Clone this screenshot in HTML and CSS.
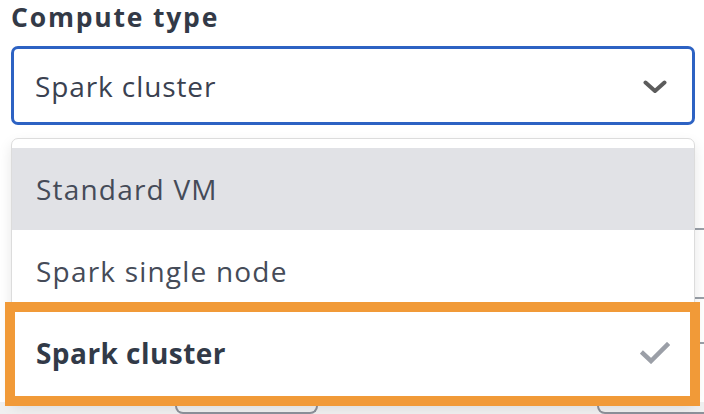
FILE: index.html
```html
<!DOCTYPE html>
<html lang="en">
<head>
<meta charset="utf-8">
<title>Compute type</title>
<link rel="stylesheet" href="styles.css">
</head>
<body>
<div class="page">
  <label class="field-label">Compute type</label>
  <div class="select-wrap">
    <div class="select">
      <span class="select-value">Spark cluster</span>
      <svg class="chevron" width="24" height="14" viewBox="0 0 24 14"><path d="M2.5 2.5 L12 11 L21.5 2.5" fill="none" stroke="#5c5c5c" stroke-width="4" stroke-linecap="round" stroke-linejoin="round"/></svg>
    </div>
    <ul class="menu">
      <li class="item hover">Standard VM</li>
      <li class="item">Spark single node</li>
      <li class="item selected">Spark cluster
        <svg class="check" width="30" height="22" viewBox="0 0 30 22"><path d="M3 11.5 L11 19 L27 3" fill="none" stroke="#9b9fa7" stroke-width="4.5" stroke-linecap="square"/></svg>
      </li>
    </ul>
  </div>
  <div class="behind">
    <div class="rule r1"></div>
    <div class="rule r2"></div>
    <div class="rule r3"></div>
    <div class="strip">
      <div class="ghost-box b1"></div>
      <div class="ghost-box b2"></div>
    </div>
  </div>
</div>
</body>
</html>
```

FILE: styles.css
```css
* { box-sizing: border-box; }
html, body { margin: 0; padding: 0; background: #ffffff; }
body {
  font-family: "Open Sans", "Noto Sans", sans-serif;
  width: 704px;
  height: 414px;
  overflow: hidden;
}
.page {
  position: relative;
  padding: 0 9px 0 11px;
}
.field-label {
  display: block;
  font-weight: 700;
  font-size: 26.5px;
  line-height: 34px;
  letter-spacing: 1.8px;
  color: #333a47;
  margin-left: 0;
  height: 46px;
}
.select-wrap { position: relative; }
.select {
  height: 79px;
  border: 3px solid #2d62c3;
  border-radius: 7px;
  display: flex;
  align-items: center;
  justify-content: space-between;
  padding: 0 25px 0 21px;
}
.select-value {
  font-size: 28px;
  letter-spacing: 0.9px;
  color: #3a4150;
  margin-top: 1px;
}
.chevron { margin-top: 2px; }
.menu {
  position: absolute;
  z-index: 2;
  top: 92px;
  left: 0;
  right: 0;
  margin: 0;
  padding: 9px 0 6px;
  list-style: none;
  background: #fff;
  border: 1px solid #dcdcdc;
  border-radius: 7px;
  box-shadow: 0 6px 14px rgba(0, 0, 0, 0.10);
}
.item {
  position: relative;
  height: 82px;
  display: flex;
  align-items: center;
  justify-content: space-between;
  padding: 0 24px 0 24px;
  font-size: 28px;
  letter-spacing: 1.2px;
  color: #454b58;
}
.item.hover { background: #e1e2e6; }
.item.selected {
  font-weight: 700;
  letter-spacing: 0.45px;
  color: #323a48;
}
.item.selected::after {
  content: "";
  position: absolute;
  top: -10px;
  bottom: -12px;
  left: -7px;
  right: -6px;
  border: 10px solid #f19a38;
}
.behind {
  position: relative;
  height: 289px;
}
.rule {
  position: absolute;
  right: -9px;
  width: 60px;
  height: 2px;
  background: #9aa0a8;
}
.r1 { top: 103px; }
.r2 { top: 172px; }
.r3 { top: 217px; }
.strip {
  position: absolute;
  left: -11px;
  right: -9px;
  bottom: 0;
  height: 12px;
  background: #f0f0f0;
  display: flex;
}
.ghost-box {
  flex-shrink: 0;
  height: 12px;
  border: 2px solid #8d919a;
  border-top: none;
  border-radius: 0 0 8px 8px;
}
.b1 { margin-left: 175px; width: 143px; }
.b2 { margin-left: 279px; width: 140px; }
```
